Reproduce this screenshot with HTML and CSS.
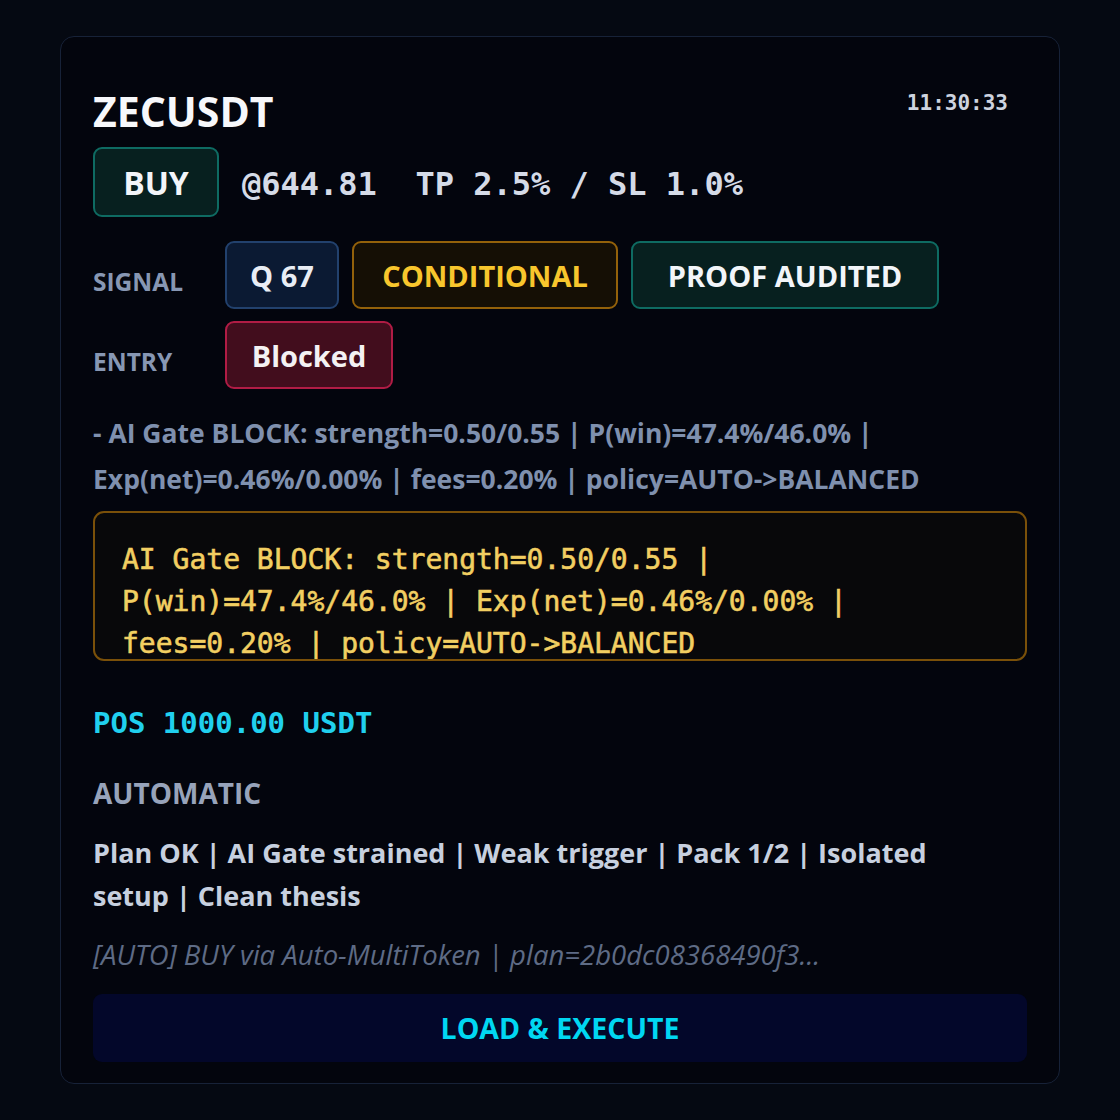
FILE: index.html
```html
<!DOCTYPE html>
<html lang="en">
<head>
<meta charset="utf-8">
<title>ZECUSDT signal</title>
<link rel="stylesheet" href="styles.css">
</head>
<body>
<div class="card">
  <div class="header">
    <div class="symbol">ZECUSDT</div>
    <div class="time">11:30:33</div>
  </div>
  <div class="order-row">
    <span class="side-badge">BUY</span>
    <span class="price">@644.81  TP 2.5% / SL 1.0%</span>
  </div>
  <div class="tag-row">
    <span class="tag-label">SIGNAL</span>
    <div class="tags">
      <span class="badge badge-q">Q 67</span>
      <span class="badge badge-cond">CONDITIONAL</span>
      <span class="badge badge-proof">PROOF AUDITED</span>
    </div>
  </div>
  <div class="tag-row tag-row-entry">
    <span class="tag-label">ENTRY</span>
    <div class="tags">
      <span class="badge badge-blocked">Blocked</span>
    </div>
  </div>
  <p class="reason">- AI Gate BLOCK: strength=0.50/0.55 | P(win)=47.4%/46.0% | Exp(net)=0.46%/0.00% | fees=0.20% | policy=AUTO-&gt;BALANCED</p>
  <div class="gate-box">AI Gate BLOCK: strength=0.50/0.55 | P(win)=47.4%/46.0% | Exp(net)=0.46%/0.00% | fees=0.20% | policy=AUTO-&gt;BALANCED</div>
  <div class="pos">POS 1000.00 USDT</div>
  <div class="mode">AUTOMATIC</div>
  <p class="plan">Plan OK | AI Gate strained | Weak trigger | Pack 1/2 | Isolated setup | Clean thesis</p>
  <p class="note">[AUTO] BUY via Auto-MultiToken | plan=2b0dc08368490f3...</p>
  <button class="exec-btn" type="button">LOAD &amp; EXECUTE</button>
</div>
</body>
</html>
```

FILE: styles.css
```css
* { box-sizing: border-box; }

html, body {
  margin: 0;
  background: #050912;
}

body {
  padding: 36px 60px;
  font-family: "Open Sans", "Noto Sans", sans-serif;
}

.card {
  display: flex;
  flex-direction: column;
  background: #03050d;
  border: 1px solid #172238;
  border-radius: 14px;
  padding: 49px 32px 21px 32px;
}

.header {
  display: flex;
  justify-content: space-between;
  align-items: flex-start;
}

.symbol {
  font-size: 41px;
  line-height: 50px;
  font-weight: 700;
  color: #f7f8fb;
}

.time {
  font-family: "DejaVu Sans Mono", monospace;
  font-weight: 700;
  font-size: 21px;
  line-height: 24px;
  color: #cdd3df;
  padding-top: 5px;
  margin-right: 19px;
}

.order-row {
  display: flex;
  align-items: center;
  gap: 23px;
  margin-top: 11px;
}

.side-badge {
  display: inline-flex;
  align-items: center;
  justify-content: center;
  width: 126px;
  height: 70px;
  border: 2px solid #0e6b62;
  background: #07201f;
  border-radius: 9px;
  font-size: 32px;
  font-weight: 700;
  color: #f2f5f9;
}

.price {
  font-family: "DejaVu Sans Mono", monospace;
  font-weight: 700;
  font-size: 32px;
  line-height: 40px;
  padding-top: 4px;
  white-space: pre;
  color: #d5dbe7;
}

.tag-row {
  display: flex;
  align-items: center;
  margin-top: 24px;
}

.tag-row-entry {
  margin-top: 12px;
}

.tag-label {
  width: 132px;
  flex: none;
  margin-top: 14px;
  font-size: 24.5px;
  line-height: 30px;
  font-weight: 700;
  color: #8797b3;
}

.tags {
  display: flex;
  gap: 13px;
}

.badge {
  display: inline-flex;
  align-items: center;
  justify-content: center;
  height: 68px;
  padding: 0 22px;
  border: 2px solid;
  border-radius: 9px;
  font-size: 29px;
  font-weight: 700;
}

.badge-q {
  min-width: 114px;
  border-color: #22416d;
  background: #0b1a33;
  color: #e9edf5;
}

.badge-cond {
  min-width: 266px;
  border-color: #93610a;
  background: #150f05;
  color: #f8c62d;
}

.badge-proof {
  min-width: 308px;
  border-color: #0e6b62;
  background: #07201f;
  color: #f2f5f9;
}

.badge-blocked {
  min-width: 168px;
  border-color: #b01c45;
  background: #420d1d;
  color: #f4f1f3;
}

.reason {
  margin: 21px 0 0 0;
  font-size: 26.5px;
  line-height: 46px;
  font-weight: 700;
  color: #7f90ae;
}

.gate-box {
  margin-top: 9px;
  height: 150px;
  overflow: hidden;
  border: 2px solid #7a5009;
  border-radius: 11px;
  background: #08080a;
  padding: 26px 60px 0 27px;
  font-family: "DejaVu Sans Mono", monospace;
  font-size: 28px;
  line-height: 42px;
  color: #f2cf62;
  -webkit-text-stroke: 0.6px #f2cf62;
}

.pos {
  margin-top: 44px;
  font-family: "DejaVu Sans Mono", monospace;
  font-weight: 700;
  font-size: 29px;
  line-height: 36px;
  color: #20d0ee;
}

.mode {
  margin-top: 34px;
  font-size: 28px;
  line-height: 36px;
  font-weight: 700;
  color: #97a3ba;
}

.plan {
  margin: 20px 0 0 0;
  max-width: 880px;
  font-size: 27px;
  line-height: 43px;
  font-weight: 700;
  color: #c7d0df;
}

.note {
  margin: 20px 0 0 0;
  font-size: 27.5px;
  line-height: 36px;
  font-style: italic;
  color: #5e6b85;
}

.exec-btn {
  margin-top: 21px;
  height: 68px;
  width: 100%;
  border: none;
  border-radius: 9px;
  background: #03072a;
  font-family: "Open Sans", "Noto Sans", sans-serif;
  font-size: 28.5px;
  font-weight: 700;
  color: #00d7f2;
  cursor: pointer;
}
```
